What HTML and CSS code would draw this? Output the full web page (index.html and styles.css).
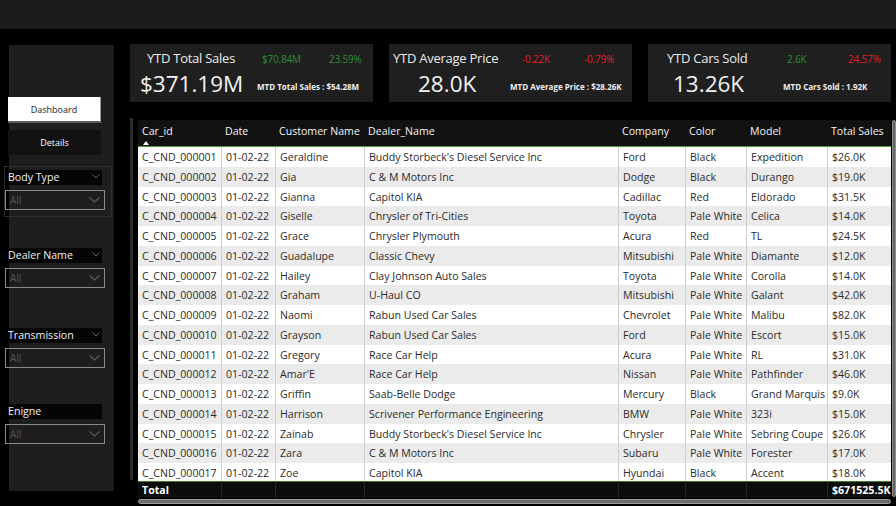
FILE: index.html
```html
<!DOCTYPE html>
<html>
<head>
<meta charset="utf-8">
<title>Car Sales Dashboard</title>
<link rel="stylesheet" href="styles.css">
</head>
<body>
<div class="topbar"></div>
<div class="main">
  <aside class="sidebar">
    <div class="btn btn-active">Dashboard</div>
    <div class="btn btn-dark">Details</div>

    <div class="filter selected f1">
      <div class="flabel"><span>Body Type</span><svg class="chev-s" width="8" height="5" viewBox="0 0 8 5"><polyline points="0.5,0.5 4,4 7.5,0.5" fill="none" stroke="#6a6a6a" stroke-width="1"/></svg></div>
      <div class="fselect"><span>All</span><svg class="chev" width="11" height="6" viewBox="0 0 11 6"><polyline points="0.5,0.5 5.5,5 10.5,0.5" fill="none" stroke="#5c5c5c" stroke-width="1.2"/></svg></div>
    </div>

    <div class="filter f2">
      <div class="flabel"><span>Dealer Name</span><svg class="chev-s" width="8" height="5" viewBox="0 0 8 5"><polyline points="0.5,0.5 4,4 7.5,0.5" fill="none" stroke="#6a6a6a" stroke-width="1"/></svg></div>
      <div class="fselect"><span>All</span><svg class="chev" width="11" height="6" viewBox="0 0 11 6"><polyline points="0.5,0.5 5.5,5 10.5,0.5" fill="none" stroke="#5c5c5c" stroke-width="1.2"/></svg></div>
    </div>

    <div class="filter f3">
      <div class="flabel"><span>Transmission</span><svg class="chev-s" width="8" height="5" viewBox="0 0 8 5"><polyline points="0.5,0.5 4,4 7.5,0.5" fill="none" stroke="#6a6a6a" stroke-width="1"/></svg></div>
      <div class="fselect"><span>All</span><svg class="chev" width="11" height="6" viewBox="0 0 11 6"><polyline points="0.5,0.5 5.5,5 10.5,0.5" fill="none" stroke="#5c5c5c" stroke-width="1.2"/></svg></div>
    </div>

    <div class="filter f4">
      <div class="flabel"><span>Enigne</span></div>
      <div class="fselect"><span>All</span><svg class="chev" width="11" height="6" viewBox="0 0 11 6"><polyline points="0.5,0.5 5.5,5 10.5,0.5" fill="none" stroke="#5c5c5c" stroke-width="1.2"/></svg></div>
    </div>
  </aside>

  <div class="content">
    <div class="kpis">
      <div class="card card-sales">
        <div class="krow1"><span class="ktitle">YTD Total Sales</span><span class="kd1 pos">$70.84M</span><span class="kd2 pos">23.59%</span></div>
        <div class="krow2"><span class="kbig">$371.19M</span><span class="kmtd">MTD Total Sales : $54.28M</span></div>
      </div>
      <div class="card card-price">
        <div class="krow1"><span class="ktitle">YTD Average Price</span><span class="kd1 neg">-0.22K</span><span class="kd2 neg">-0.79%</span></div>
        <div class="krow2"><span class="kbig">28.0K</span><span class="kmtd">MTD Average Price : $28.26K</span></div>
      </div>
      <div class="card card-cars">
        <div class="krow1"><span class="ktitle">YTD Cars Sold</span><span class="kd1 pos">2.6K</span><span class="kd2 neg">24.57%</span></div>
        <div class="krow2"><span class="kbig">13.26K</span><span class="kmtd">MTD Cars Sold : 1.92K</span></div>
      </div>
    </div>

    <div class="tablezone">
      <div class="vbar"></div>
      <div class="tablewrap">
        <div class="tr thead">
          <div class="th"><span>Car_id</span><i class="sort"></i></div>
          <div class="th">Date</div>
          <div class="th">Customer Name</div>
          <div class="th">Dealer_Name</div>
          <div class="th">Company</div>
          <div class="th">Color</div>
          <div class="th">Model</div>
          <div class="th">Total Sales</div>
        </div>
        <div class="tbody">
          <div class="tr"><div class="td">C_CND_000001</div><div class="td">01-02-22</div><div class="td">Geraldine</div><div class="td">Buddy Storbeck's Diesel Service Inc</div><div class="td">Ford</div><div class="td">Black</div><div class="td">Expedition</div><div class="td">$26.0K</div></div>
          <div class="tr"><div class="td">C_CND_000002</div><div class="td">01-02-22</div><div class="td">Gia</div><div class="td">C &amp; M Motors Inc</div><div class="td">Dodge</div><div class="td">Black</div><div class="td">Durango</div><div class="td">$19.0K</div></div>
          <div class="tr"><div class="td">C_CND_000003</div><div class="td">01-02-22</div><div class="td">Gianna</div><div class="td">Capitol KIA</div><div class="td">Cadillac</div><div class="td">Red</div><div class="td">Eldorado</div><div class="td">$31.5K</div></div>
          <div class="tr"><div class="td">C_CND_000004</div><div class="td">01-02-22</div><div class="td">Giselle</div><div class="td">Chrysler of Tri-Cities</div><div class="td">Toyota</div><div class="td">Pale White</div><div class="td">Celica</div><div class="td">$14.0K</div></div>
          <div class="tr"><div class="td">C_CND_000005</div><div class="td">01-02-22</div><div class="td">Grace</div><div class="td">Chrysler Plymouth</div><div class="td">Acura</div><div class="td">Red</div><div class="td">TL</div><div class="td">$24.5K</div></div>
          <div class="tr"><div class="td">C_CND_000006</div><div class="td">01-02-22</div><div class="td">Guadalupe</div><div class="td">Classic Chevy</div><div class="td">Mitsubishi</div><div class="td">Pale White</div><div class="td">Diamante</div><div class="td">$12.0K</div></div>
          <div class="tr"><div class="td">C_CND_000007</div><div class="td">01-02-22</div><div class="td">Hailey</div><div class="td">Clay Johnson Auto Sales</div><div class="td">Toyota</div><div class="td">Pale White</div><div class="td">Corolla</div><div class="td">$14.0K</div></div>
          <div class="tr"><div class="td">C_CND_000008</div><div class="td">01-02-22</div><div class="td">Graham</div><div class="td">U-Haul CO</div><div class="td">Mitsubishi</div><div class="td">Pale White</div><div class="td">Galant</div><div class="td">$42.0K</div></div>
          <div class="tr"><div class="td">C_CND_000009</div><div class="td">01-02-22</div><div class="td">Naomi</div><div class="td">Rabun Used Car Sales</div><div class="td">Chevrolet</div><div class="td">Pale White</div><div class="td">Malibu</div><div class="td">$82.0K</div></div>
          <div class="tr"><div class="td">C_CND_000010</div><div class="td">01-02-22</div><div class="td">Grayson</div><div class="td">Rabun Used Car Sales</div><div class="td">Ford</div><div class="td">Pale White</div><div class="td">Escort</div><div class="td">$15.0K</div></div>
          <div class="tr"><div class="td">C_CND_000011</div><div class="td">01-02-22</div><div class="td">Gregory</div><div class="td">Race Car Help</div><div class="td">Acura</div><div class="td">Pale White</div><div class="td">RL</div><div class="td">$31.0K</div></div>
          <div class="tr"><div class="td">C_CND_000012</div><div class="td">01-02-22</div><div class="td">Amar'E</div><div class="td">Race Car Help</div><div class="td">Nissan</div><div class="td">Pale White</div><div class="td">Pathfinder</div><div class="td">$46.0K</div></div>
          <div class="tr"><div class="td">C_CND_000013</div><div class="td">01-02-22</div><div class="td">Griffin</div><div class="td">Saab-Belle Dodge</div><div class="td">Mercury</div><div class="td">Black</div><div class="td">Grand Marquis</div><div class="td">$9.0K</div></div>
          <div class="tr"><div class="td">C_CND_000014</div><div class="td">01-02-22</div><div class="td">Harrison</div><div class="td">Scrivener Performance Engineering</div><div class="td">BMW</div><div class="td">Pale White</div><div class="td">323i</div><div class="td">$15.0K</div></div>
          <div class="tr"><div class="td">C_CND_000015</div><div class="td">01-02-22</div><div class="td">Zainab</div><div class="td">Buddy Storbeck's Diesel Service Inc</div><div class="td">Chrysler</div><div class="td">Pale White</div><div class="td">Sebring Coupe</div><div class="td">$26.0K</div></div>
          <div class="tr"><div class="td">C_CND_000016</div><div class="td">01-02-22</div><div class="td">Zara</div><div class="td">C &amp; M Motors Inc</div><div class="td">Subaru</div><div class="td">Pale White</div><div class="td">Forester</div><div class="td">$17.0K</div></div>
          <div class="tr"><div class="td">C_CND_000017</div><div class="td">01-02-22</div><div class="td">Zoe</div><div class="td">Capitol KIA</div><div class="td">Hyundai</div><div class="td">Black</div><div class="td">Accent</div><div class="td">$18.0K</div></div>
        </div>
        <div class="tr ttotal">
          <div class="tf">Total</div><div class="tf"></div><div class="tf"></div><div class="tf"></div><div class="tf"></div><div class="tf"></div><div class="tf"></div><div class="tf tf-last">$671525.5K</div>
        </div>
        <div class="hscroll"><div class="hthumb"></div></div>
      </div>
      <div class="vscroll"></div>
    </div>
  </div>
</div>
</body>
</html>
```

FILE: styles.css
```css
* { box-sizing: border-box; margin: 0; padding: 0; }
html, body {
  width: 896px;
  height: 506px;
  overflow: hidden;
  background: #000;
  font-family: "Open Sans", "Noto Sans", sans-serif;
  color: #fff;
}
.topbar { height: 29px; background: #1b1b1b; }
.main { display: flex; padding: 15px 0 0 9px; }

/* ---------- sidebar ---------- */
.sidebar {
  width: 105px;
  height: 446px;
  margin-top: 1px;
  background: #1e1e1e;
  display: flex;
  flex-direction: column;
}
.btn {
  width: 93px;
  height: 26px;
  margin-left: -1px;
  display: flex;
  align-items: center;
  justify-content: center;
  font-size: 9px;
}
.btn-active {
  margin-top: 52px;
  background: #fff;
  color: #222;
  border-bottom: 2px solid #5a5a5a;
  border-right: 1px solid #9a9a9a;
}
.btn-dark {
  margin-top: 7px;
  height: 25px;
  background: #121212;
  color: #fff;
}
.filter {
  width: 108px;
  height: 51px;
  margin-left: -5px;
  border: 1px solid transparent;
  padding-top: 3px;
  display: flex;
  flex-direction: column;
}
.filter.selected { border-color: #2e2e2e; }
.f1 { margin-top: 11px; }
.f2 { margin-top: 27px; }
.f3 { margin-top: 29px; }
.f4 { margin-top: 25px; }
.flabel {
  margin-left: 3px;
  width: 94px;
  height: 15px;
  background: #050505;
  display: flex;
  align-items: center;
  justify-content: space-between;
  padding-right: 2px;
  font-size: 10.6px;
  line-height: 15px;
  color: #f2f2f2;
}
.chev-s { margin-bottom: 3px; }
.fselect {
  margin-top: 5px;
  width: 100px;
  height: 20px;
  border: 1.5px solid #8a8a8a;
  display: flex;
  align-items: center;
  justify-content: space-between;
  padding: 0 4px 0 4px;
  font-size: 10px;
  color: #555;
}

/* ---------- content ---------- */
.content { margin-left: 16px; display: flex; flex-direction: column; }
.kpis { display: flex; gap: 16px; }
.card {
  width: 243px;
  height: 58px;
  background: #1f1f1f;
  display: flex;
  flex-direction: column;
  padding-top: 5px;
}
.card-sales { --t: 17px; --d1: 132px; --d2: 199px; --b: 10px; --m: 127px; }
.card-price { --t: 4px;  --d1: 133px; --d2: 195px; --b: 29px; --m: 121px; }
.card-cars  { --t: 19px; --d1: 139px; --d2: 200px; --b: 25px; --m: 135px; }
.krow1 {
  display: flex;
  align-items: baseline;
  padding-left: var(--t);
  white-space: nowrap;
  height: 18px;
}
.ktitle {
  width: calc(var(--d1) - var(--t));
  font-size: 13px;
  letter-spacing: -0.25px;
  line-height: 18px;
  color: #ececec;
}
.kd1 { width: calc(var(--d2) - var(--d1)); font-size: 10px; letter-spacing: -0.2px; }
.kd2 { font-size: 10px; letter-spacing: -0.2px; }
.pos { color: #2f8f2f; }
.neg { color: #e81e1e; }
.krow2 {
  display: flex;
  align-items: flex-end;
  padding-left: var(--b);
  margin-top: 4px;
  white-space: nowrap;
}
.kbig {
  width: calc(var(--m) - var(--b));
  font-size: 22.5px;
  line-height: 26px;
  color: #f2f2f2;
}
.kmtd {
  font-size: 8px;
  line-height: 10px;
  font-weight: 700;
  color: #f0f0f0;
  margin-bottom: 5px;
}

/* ---------- table ---------- */
.tablezone { display: flex; margin-top: 16px; }
.vbar { width: 3px; height: 362px; background: #2a2a2a; margin-right: 5px; }
.tablewrap { width: 753px; margin-top: 2px; display: flex; flex-direction: column; }
.tr {
  display: grid;
  grid-template-columns: 83px 54px 89px 254px 67px 61px 81px 64px;
}
.thead {
  height: 27px;
  background: #111;
  border-bottom: 1px solid #4f9a35;
}
.th {
  font-size: 10.6px;
  line-height: 14px;
  padding: 4px 0 0 4px;
  color: #f4f4f4;
  white-space: nowrap;
  display: flex;
  flex-direction: column;
  align-items: flex-start;
}
.sort {
  margin-top: 3px;
  margin-left: 1px;
  width: 0;
  height: 0;
  border-left: 3.5px solid transparent;
  border-right: 3.5px solid transparent;
  border-bottom: 4px solid #fff;
}
.tbody {
  height: 334px;
  overflow: hidden;
  background: #fff;
}
.tbody .tr { height: 19.75px; background: #fff; }
.tbody .tr:nth-child(even) { background: #ebebeb; }
.td {
  font-size: 10.6px;
  line-height: 17.75px;
  padding: 2px 0 0 4px;
  color: #2b2b2b;
  white-space: nowrap;
  overflow: hidden;
  border-left: 1px solid #cfcfcf;
}
.td:first-child { border-left: none; }
.ttotal {
  height: 17px;
  background: #0c0c0c;
  border-top: 1px solid #3f7f2c;
}
.tf {
  font-size: 10.6px;
  line-height: 16px;
  font-weight: 700;
  padding-left: 4px;
  color: #fff;
  white-space: nowrap;
  border-left: 1px solid #262626;
}
.tf:first-child { border-left: none; }
.tf-last { overflow: visible; }
.hscroll {
  height: 7px;
  padding-top: 1px;
  background: #000;
}
.hthumb {
  height: 5px;
  background: #6c6c6c;
  border: 1px solid #9a9a9a;
  border-radius: 3px;
}
.vscroll {
  width: 4px;
  height: 377px;
  margin-top: 2px;
  margin-left: 1px;
  background: #666;
  border: 1px solid #8c8c8c;
  border-radius: 2px;
}
```
